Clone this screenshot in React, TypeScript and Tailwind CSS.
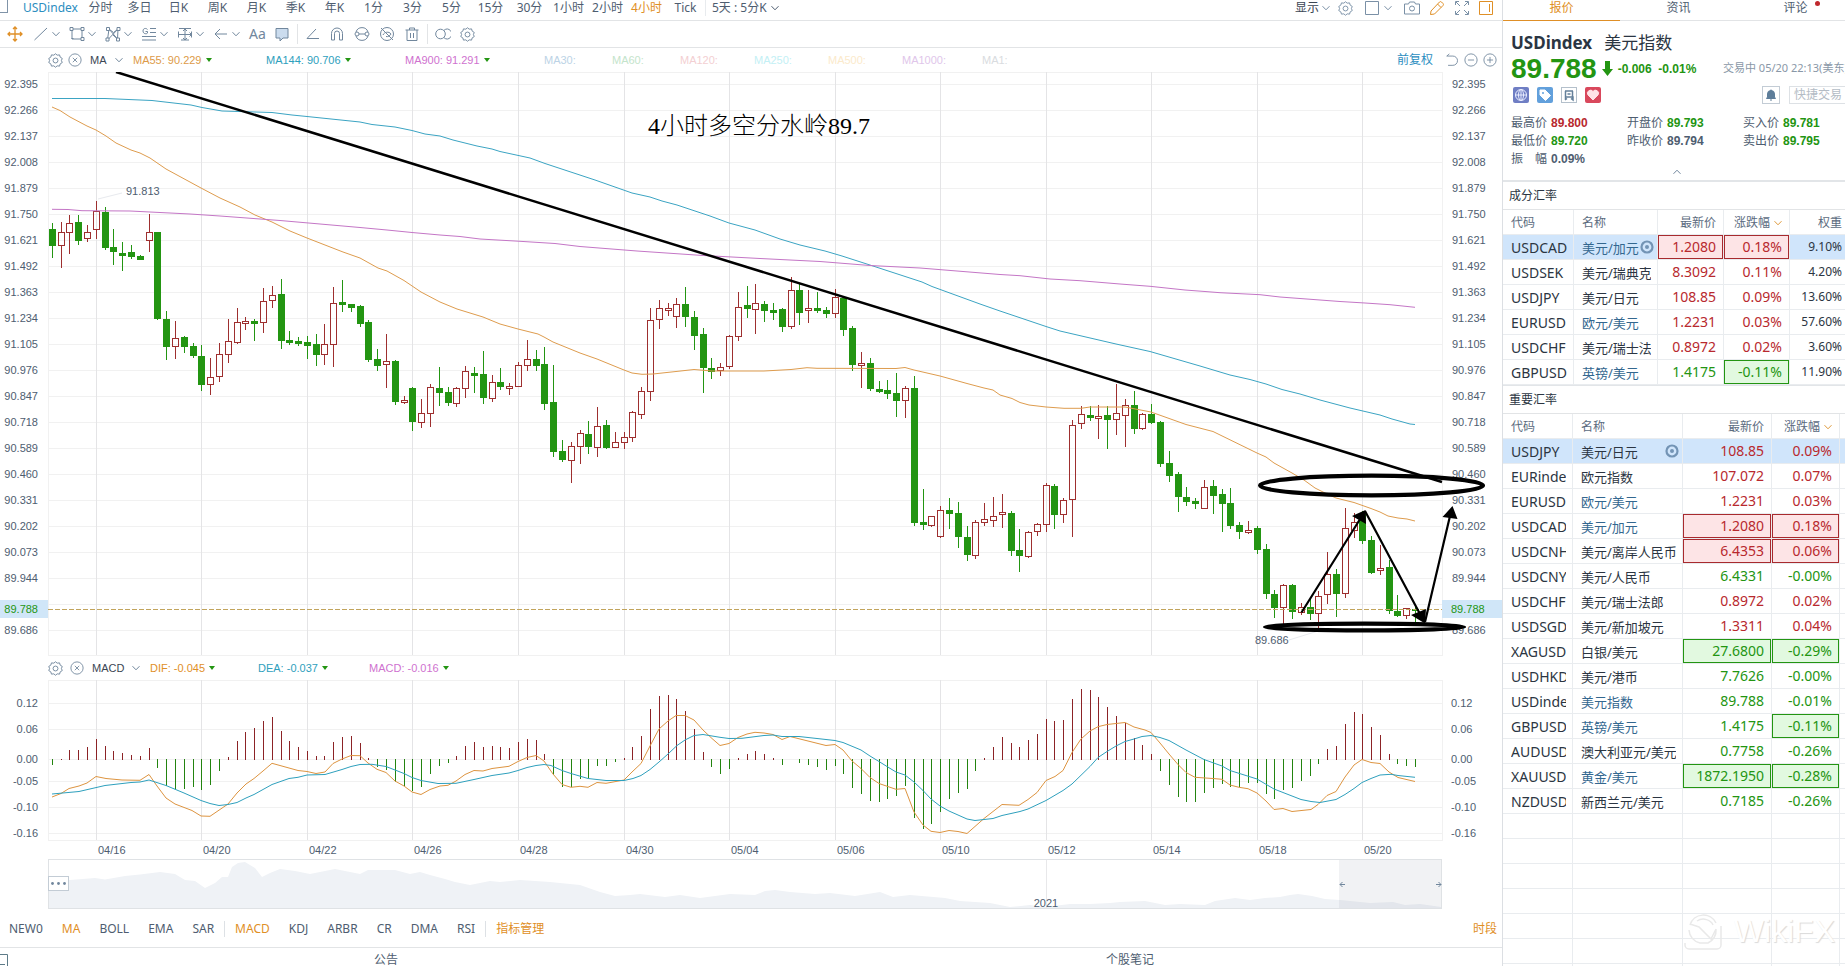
import React from "react";

/* ------------------------------------------------------------------ */
/* Chart data                                                          */
/* ------------------------------------------------------------------ */

type Candle = [number, number, number, number, number]; // high, body top, body bottom, low, rising

const CANDLES: Candle[] = [
  [223,229,246,258,0],[222,232,246,268,1],[215,223,233,254,1],[215,222,241,245,0],[225,232,239,242,1],
  [201,211,230,239,1],[207,212,248,250,0],[229,247,252,265,0],[242,253,256,271,0],[245,252,257,259,0],
  [255,256,260,260,0],[214,232,241,252,1],[232,232,319,320,0],[311,319,347,360,0],[321,338,347,359,1],
  [336,337,347,353,0],[343,346,356,358,0],[345,356,385,391,0],[358,377,385,395,1],[343,354,377,382,1],
  [319,341,355,363,1],[308,322,343,344,1],[317,321,324,330,1],[319,321,324,341,0],[288,301,323,333,1],
  [286,295,301,308,1],[279,294,341,349,0],[331,340,343,345,0],[337,341,344,346,0],[336,342,346,359,0],
  [334,344,355,366,0],[324,344,355,365,1],[287,303,345,367,1],[280,302,305,312,0],[304,304,308,312,0],
  [305,306,324,327,0],[320,322,360,362,0],[349,359,366,371,0],[334,361,365,388,1],[360,361,402,405,0],
  [396,400,403,404,1],[387,388,422,431,0],[399,413,423,428,1],[384,387,414,427,1],[367,388,393,406,0],
  [387,392,403,406,0],[387,388,404,407,1],[366,371,389,398,1],[367,373,376,393,0],[351,374,398,404,0],
  [375,382,399,402,1],[368,382,387,390,0],[383,386,389,395,1],[362,365,387,387,1],[340,359,366,371,1],
  [350,359,366,371,0],[347,364,404,410,0],[365,402,452,457,0],[440,451,460,462,0],[442,446,461,483,1],
  [430,433,447,464,1],[421,434,447,454,0],[407,426,448,457,1],[420,425,448,449,0],[432,442,448,448,1],
  [432,437,443,449,1],[411,412,438,442,1],[387,391,415,419,1],[308,320,392,401,1],[300,308,320,329,1],
  [303,308,311,316,1],[298,304,317,328,1],[287,304,317,327,0],[311,317,336,350,0],[328,334,368,393,0],
  [358,368,372,379,0],[363,367,371,376,1],[335,336,367,369,1],[292,307,337,341,1],[286,305,309,318,0],
  [284,303,310,334,1],[301,304,311,322,0],[303,310,313,320,0],[308,309,327,332,0],[277,290,327,329,1],
  [284,290,313,325,0],[290,308,311,323,1],[292,308,311,313,0],[307,310,314,318,0],[289,297,314,318,1],
  [298,298,330,336,0],[326,328,365,371,0],[352,363,366,388,1],[358,363,389,391,0],[381,389,392,393,0],
  [380,390,394,399,0],[373,393,401,417,0],[386,388,401,418,1],[376,388,523,526,0],[489,522,525,530,0],
  [516,516,526,527,1],[506,510,537,538,1],[498,510,514,529,0],[502,513,537,548,0],[526,537,555,561,0],
  [520,522,556,559,1],[503,519,523,526,1],[497,516,521,527,1],[494,512,515,528,1],[511,513,551,556,0],
  [529,550,556,572,0],[531,532,557,558,1],[523,524,532,536,1],[483,485,525,532,1],[484,486,515,529,0],
  [498,500,515,523,1],[420,425,500,537,1],[406,414,424,429,1],[406,415,418,421,0],[405,416,419,439,1],
  [406,415,420,449,0],[384,413,420,435,1],[399,405,416,447,1],[391,405,429,434,0],[413,414,429,430,1],
  [404,414,423,424,0],[421,422,464,467,0],[451,463,476,482,0],[472,474,497,512,0],[487,497,502,506,0],
  [498,501,504,509,0],[480,487,509,509,1],[480,486,496,514,0],[489,494,504,532,0],[488,503,526,529,0],
  [522,525,532,539,0],[521,530,533,534,1],[526,528,550,554,0],[544,549,594,599,0],[590,594,608,618,0],
  [584,585,608,625,1],[584,585,612,619,0],[603,607,613,615,1],[599,607,614,620,0],[591,596,614,629,1],
  [552,574,595,604,1],[569,574,594,617,0],[508,528,594,598,1],[513,522,531,538,1],[511,513,541,544,0],
  [536,540,573,574,0],[545,568,571,575,1],[560,567,611,614,0],[595,611,616,617,0],[608,608,616,619,1],
  [607,609,611,622,0],
];

const HISTOGRAM: number[] = [
  -6,1,10,10,13,21,14,9,7,5,4,12,-9,-27,-30,-30,-28,-31,-26,-12,3,19,28,32,39,43,29,19,13,9,4,4,18,23,24,17,2,-8,-11,-23,
  -27,-32,-28,-15,-7,-4,4,14,18,13,14,13,12,18,21,20,6,-16,-28,-28,-20,-19,-7,-7,-3,2,13,24,51,64,65,61,49,31,8,-8,-15,
  -10,2,6,9,6,2,-6,0,-4,-6,-8,-11,-7,-15,-29,-35,-42,-43,-40,-37,-27,-59,-70,-65,-53,-40,-34,-30,-12,2,13,23,17,13,20,
  26,41,39,40,61,71,70,63,53,44,37,22,15,6,-12,-26,-38,-43,-43,-34,-29,-25,-28,-28,-24,-24,-35,-40,-31,-29,-22,-17,-5,
  11,14,36,48,46,33,25,6,-5,-7,-8,
];

const MA55 =
  "52,107 60,110.5 70,117 87,126 96,130 106,136 116,143 131,150 140,153 150,158 166,169 201,188 220,198 240,207 255,215 272,222 290,231 307,238 343,252 360,258 378,268 387,271 404,280.5 421,292 440,302 457,309 483,317 500,324 518,329 538,334 544,337 553,342 580,353 597,359 624,370 632,373 642,374.3 653,374 676,371.5 694,369.5 712,371 764,371 791,369.5 807,367.7 817,368.3 896,368.5 905,367.5 914,370 940,376 967,383.5 984,388 993,390 1000,395 1012,398.5 1020,402.5 1029,405 1046,407 1064,408.3 1081,408.3 1090,407 1125,407 1151,412 1186,424.5 1213,431.5 1257,453 1266,457 1274,463 1292,473 1304,480 1315,488 1327,494 1336,498 1354,502.5 1371,508.5 1380,512 1388,516 1398,518 1407,519 1415,521";
const MA144 =
  "52,98.5 105,98.5 152,100.5 191,105 202,107.5 222,111 272,112.5 292,115 307,116.5 360,122 372,124.5 395,127 412,130.5 425,134 440,136 453,140 477,146 492,149 500,151.5 530,158 545,163.5 595,180 632,193 650,197 662,201 677,205 710,216 729,223 755,230 780,239 800,245 825,251 842,256 873,266 922,282 932,286.5 980,304 1000,311 1046,326.5 1060,331 1116,344 1150,351.5 1200,366 1230,375 1250,379.5 1266,384 1282,389.5 1300,394 1320,400 1350,408 1380,415 1392,419 1410,424 1415,424.5";
const MA900 =
  "52,209.3 68,209.5 82,210.7 130,211 190,214 220,216 280,220.5 360,227.5 387,230 412,232.5 440,235 460,236.5 480,239 520,241.3 555,243.5 580,246.5 637,251 700,255.3 760,258.5 820,261.5 870,265.5 920,268 1000,274.5 1020,275.7 1050,279 1080,280.7 1120,284 1150,286.3 1185,290 1205,291.5 1220,292.7 1260,294.7 1280,297 1340,301.5 1365,303 1390,304.7 1415,307.3";
const DIF =
  "52,797 61,793.5 69,788.5 79,786 87,783 96,776.5 106,778.5 122,780 140,780.3 149,774.5 157,786 166,798 175,804 192,810.5 201,816 210,816.3 228,804 237,793 246,784 254,778.5 263,771 272,763.3 289,768 298,770.5 307,771.5 316,773.5 325,772 333,763.5 342,759 351,755.5 360,755.7 368,763 377,769.3 386,772.5 395,781 404,786 412,792 421,794.5 430,789.5 440,786 448,785.3 456,781 465,774.5 474,770.5 483,771 492,768.5 509,766.3 518,761.5 527,757.5 536,755.5 544,761 553,774 562,784.5 571,787.3 580,786.3 588,787.3 597,782.5 606,783.3 624,780 632,772 641,763.5 650,746 659,729 668,721 676,715.5 685,715.5 694,720 703,730 712,738.5 720,745.5 729,743.5 738,737.5 747,734 755,732.3 764,733 773,734.5 782,739.5 790,736.5 826,745.5 835,744.5 843,750 852,761 861,768.5 870,777.5 879,783.5 896,789.3 905,788.5 914,812 923,825 931,831.3 940,832.5 949,830.5 958,831.5 967,833.5 984,818.5 1002,804.5 1019,805.3 1028,799.5 1037,792.5 1046,780.5 1055,776.5 1063,770.5 1072,752.5 1081,739 1090,731 1098,726.7 1107,724.5 1125,722.5 1134,727 1145,730 1151,732.5 1160,743 1169,754 1178,764.5 1186,772.5 1195,777.3 1213,778.5 1222,779.3 1230,785 1239,787.3 1248,788.7 1257,793 1266,801 1274,809.5 1283,808.5 1292,811.5 1311,809.5 1318,804.5 1327,795.5 1336,791.5 1345,777 1354,765 1362,759.5 1371,762.5 1380,763.5 1389,772 1398,777.5 1415,781.5";
const DEA =
  "52,794 79,791.5 105,785.5 131,782.5 140,782 149,780 166,785.5 184,793 201,800.5 210,803.5 219,805.5 228,804.5 237,802.5 246,798 254,794.5 272,784.5 289,778.5 298,777.3 307,775 325,774.5 342,769.5 351,766.5 360,764.5 372,764.3 386,766.5 395,770 404,773.5 412,777.5 421,780.5 438,783.5 456,783.3 474,779.5 492,775.5 509,773 518,770.5 527,767.5 536,765.5 544,764.5 551,765.5 562,770.5 571,773.5 588,778.5 606,780.5 624,780.5 633,778.5 641,775.5 650,769.5 659,762 668,754 677,745.5 685,740 694,735.5 703,734.5 720,737.3 729,738.5 742,738.3 764,735.5 773,735 782,736.5 799,736.5 835,740.5 843,742.5 861,750 870,756 879,761.5 887,766.5 896,772 905,775 914,782 923,790.5 931,799 940,806 949,811 958,815 967,819 975,820.5 984,819.5 993,818.5 1002,815.5 1020,811.5 1028,809 1046,800.5 1063,790.5 1072,784 1090,766.5 1098,757.5 1107,751.5 1116,746 1125,741.5 1134,739 1142,736.5 1151,735.5 1160,737.5 1169,740.5 1186,750 1204,759.5 1222,766 1230,770.5 1257,779 1274,789 1283,792.5 1292,796 1301,799.5 1311,801.5 1320,802.5 1336,799.5 1345,794.5 1354,788.5 1362,782.5 1371,778.5 1380,775 1391,774.3 1398,775.5 1415,777.3";
const HISTORY =
  "48,908 48,881 70,880 95,878 105,879.5 125,876 140,874.5 160,872 175,874 185,880 195,881 205,888 215,883 222,877 228,877 232,867 238,863 245,862 255,868 262,877 270,873 280,869 295,871 310,874 320,872 335,869 350,872 360,874 368,870 395,870 410,874 420,872 430,875 445,879 455,882 470,885 480,883 490,881 500,882 520,880 550,882 580,885 600,892 615,896 630,895 640,894 665,897 680,895 700,898 715,896 730,894 755,895 765,891 775,890 790,892 815,894 830,893 855,896 880,892 893,897 910,895 945,898 960,901 990,903 1010,907 1030,905 1045,907 1070,904 1090,904 1110,903 1120,902 1145,901 1165,905 1180,904 1205,905 1215,901 1235,898 1250,900 1265,898 1280,897 1290,895 1298,894 1312,896 1325,899 1340,900 1370,903 1393,902 1405,905 1420,904 1441,907 1441,908";

const PRICES = [
  "92.395","92.266","92.137","92.008","91.879","91.750","91.621","91.492","91.363","91.234","91.105",
  "90.976","90.847","90.718","90.589","90.460","90.331","90.202","90.073","89.944","","89.686",
];
const DATES = ["04/16","04/20","04/22","04/26","04/28","04/30","05/04","05/06","05/10","05/12","05/14","05/18","05/20"];
const MACD_LEVELS: [string, number][] = [
  ["0.12", 703],["0.06", 729],["0.00", 759],["-0.05", 781],["-0.10", 807],["-0.16", 833],
];

const xAt = (i: number) => Math.floor(52.35 + 8.795 * i);

/* ------------------------------------------------------------------ */
/* Small icons                                                         */
/* ------------------------------------------------------------------ */

function Icon({ children, className = "" }: { children: React.ReactNode; className?: string }) {
  return (
    <svg viewBox="0 0 16 16" className={`h-4 w-4 shrink-0 ${className}`} fill="none" stroke="currentColor" strokeWidth="1" aria-hidden="true">
      {children}
    </svg>
  );
}

function Chevron({ className = "" }: { className?: string }) {
  return (
    <svg viewBox="0 0 8 8" className={`h-2 w-2 shrink-0 ${className}`} fill="none" stroke="currentColor" aria-hidden="true">
      <path d="M.5 2.2 4 5.8 7.5 2.2" />
    </svg>
  );
}

const Gear = () => (
  <Icon className="h-[15px] w-[15px]">
    <path d="M8 .8 9.8 2.3 12.3 2 13 4.4 15.2 5.8 14.3 8 15.2 10.2 13 11.6 12.3 14 9.8 13.7 8 15.2 6.2 13.7 3.7 14 3 11.6.8 10.2 1.7 8 .8 5.8 3 4.4 3.7 2 6.2 2.3Z" strokeLinejoin="round" />
    <circle cx="8" cy="8" r="2.6" />
  </Icon>
);

const CloseCircle = () => (
  <Icon className="h-[14px] w-[14px]">
    <circle cx="8" cy="8" r="7" />
    <path d="m5.5 5.5 5 5m0-5-5 5" />
  </Icon>
);

const Down = () => (
  <svg viewBox="0 0 6 4" className="h-1 w-1.5 shrink-0" aria-hidden="true">
    <path d="M0 0h6L3 4Z" fill="#239512" />
  </svg>
);

const DRAW_TOOLS: [string, React.ReactNode][] = [
  ["直线", <path key="a" d="M1.5 14 14 2" />],
  ["矩形", <g key="a"><path d="M3 3h10v10H3z" /><path d="M1 1.5h3v3H1zM12 1.5h3v3h-3zM12 11.500h3v3h-3zM2.500 12.500h2" fill="#fff" /></g>],
  ["形态", <g key="a"><path d="M2.500 13.500 4 3l8.500 10L13 3 3.500 13M4 3l4.500 3.500L13 3M8 9l4.500 4" /><path d="M1.500 1.500h3v3h-3zM12 1.500h3v3h-3zM1 12h3v3H1zM11.500 12h3v3h-3z" fill="#fff" /></g>],
  ["黄金分割", <g key="a"><path d="M9 2.500h6M9 6.500h6M1 10.500h14M1 14h14" /><path d="M6.500 3.500C5.500 2 2 1.800 2 5s4 3.200 4.500 2V5.500H4.500" /></g>],
  ["测量", <g key="a"><path d="M2 2.500h12M4 14h8M8 3v11M1 8.500h14M1.500 5.500v6M14.500 5.500v6M6 5l2-2 2 2M6 12l2 2 2-2M12.500 6.500l2 2-2 2" /></g>],
  ["箭头", <path key="a" d="M14 8H2m5-5L2 8l5 5" />],
];

const EDIT_TOOLS: [string, React.ReactNode][] = [
  ["角度", <path key="a" d="M12 3 3 12.500h12" />],
  ["磁铁", <path key="a" d="M2.500 14V7.500a5.500 5.500 0 0 1 11 0V14h-3V7.500a2.500 2.500 0 0 0-5 0V14z" />],
  ["同步", <g key="a"><path d="M2 6a6.300 6.300 0 0 1 12 0M14 10a6.300 6.300 0 0 1-12 0" /><circle cx="3" cy="8" r="2" /><circle cx="13" cy="8" r="2" /><path d="M5 8h6" /></g>],
  ["隐藏", <g key="a"><circle cx="8" cy="8" r="6.500" /><path d="m2 2 12 12M4 9c1-3 6-4 8-1M7 10.500c2 .5 4-.5 5-2.500" /></g>],
  ["删除", <path key="a" d="M1.500 4h13M5.500 4V2h5v2M3 4v10.500h10V4M6.500 7v5M9.500 7v5" />],
];

/* ------------------------------------------------------------------ */
/* Bars                                                                */
/* ------------------------------------------------------------------ */

const PERIODS = ["分时","多日","日K","周K","月K","季K","年K","1分","3分","5分","15分","30分","1小时","2小时","4小时","Tick"];

function PeriodBar() {
  return (
    <nav className="flex h-[21px] shrink-0 items-start border-b border-[#e2e4e6] leading-4 whitespace-nowrap">
      <span className="-ml-1 h-[13px] w-3 shrink-0 border border-t-0 border-[#8094a8]" />
      <a href="#usdindex" className="ml-[15px] w-[58px] text-[#2c8ebf]">USDindex</a>
      {PERIODS.map((p) => (
        <button key={p} className={p === "4小时" ? "w-[39px] text-center text-[#df8f26]" : "w-[39px] text-center"}>
          {p}
        </button>
      ))}
      <span className="h-4 w-px bg-[#e8ebee]" />
      <button className="ml-[6px] flex items-center gap-1">5天 : 5分K <Chevron /></button>
      <div className="ml-auto flex items-center pr-2 text-[#7a90a6]">
        <button className="flex items-center gap-[3px] text-[#3b4653]">显示 <Chevron className="text-[#7a90a6]" /></button>
        <button aria-label="设置" className="ml-2"><Gear /></button>
        <button aria-label="布局" className="ml-[11px] flex items-center gap-1"><Icon><path d="M1.500 1.500h13v13h-13z" /></Icon><Chevron /></button>
        <button aria-label="截图" className="ml-3"><Icon><path d="M.5 4h4l1-2h5l1 2h4v10H.5z" /><circle cx="8" cy="8.500" r="2.500" /></Icon></button>
        <button aria-label="画笔" className="ml-[9px] text-[#df8f26]"><Icon><path d="M1.500 14.500 2 11 10.500 2a1.500 1.500 0 0 1 2 0l1.500 1.500a1.500 1.500 0 0 1 0 2L5.500 14zM8.500 4l3.500 3.500" /></Icon></button>
        <button aria-label="全屏" className="ml-[9px]"><Icon><path d="M1.500 5V1.500H5M11 1.500h3.500V5M14.500 11v3.500H11M5 14.500H1.500V11M2 2l4 4M14 2l-4 4M14 14l-4-4M2 14l4-4" /></Icon></button>
        <button aria-label="侧栏" className="ml-2 text-[#df8f26]"><Icon><path d="M1.500 1.500h13v13h-13zM11.500 4v8" /></Icon></button>
      </div>
    </nav>
  );
}

function DrawBar() {
  return (
    <div className="flex h-[27px] shrink-0 items-center border-b border-[#e2e4e6] pl-[7px] text-[#71879d]">
      <button aria-label="移动" className="mr-[10px] text-[#df8f26]">
        <Icon><path d="M8 1v14M1 8h14M6 3l2-2 2 2M6 13l2 2 2-2M3 6 1 8l2 2M13 6l2 2-2 2" strokeWidth="1.300" /></Icon>
      </button>
      {DRAW_TOOLS.map(([label, art]) => (
        <button key={label} aria-label={label} className="flex w-9 items-center gap-[3px]">
          <Icon>{art}</Icon><Chevron />
        </button>
      ))}
      <button className="w-[25px] text-left text-sm leading-4">Aa</button>
      <button aria-label="注释" className="mr-[7px]">
        <Icon><path d="M2 2.500h12v9.500H9l-3 3v-3H2z" fill="#cbdcee" strokeLinejoin="round" /></Icon>
      </button>
      <span className="mr-[6px] h-5 w-px bg-[#e2e4e6]" />
      <div className="flex gap-[9px]">
        {EDIT_TOOLS.map(([label, art]) => (
          <button key={label} aria-label={label}><Icon>{art}</Icon></button>
        ))}
      </div>
      <span className="mx-[7px] h-5 w-px bg-[#e2e4e6]" />
      <div className="flex gap-[9px]">
        <button aria-label="对比"><Icon><circle cx="5.500" cy="8" r="4.800" /><path d="M9 4.300a4.800 4.800 0 1 1 0 7.400" /></Icon></button>
        <button aria-label="画线设置"><Gear /></button>
      </div>
    </div>
  );
}

function MaLegend() {
  return (
    <div className="flex h-6 shrink-0 items-center pl-12 font-['Liberation_Sans',sans-serif] text-[11px] whitespace-nowrap">
      <div className="flex w-[85px] items-center text-[#71879d]">
        <button aria-label="MA 设置" className="mr-[5px]"><Gear /></button>
        <button aria-label="关闭 MA"><CloseCircle /></button>
        <button className="ml-2 flex items-center gap-2 text-[#3b4653]">MA <Chevron className="text-[#71879d]" /></button>
      </div>
      <span className="flex w-[133px] items-center gap-1 text-[#dd9a48]">MA55: 90.229 <Down /></span>
      <span className="flex w-[139px] items-center gap-1 text-[#2ea0bd]">MA144: 90.706 <Down /></span>
      <span className="flex w-[139px] items-center gap-1 text-[#cf72cf]">MA900: 91.291 <Down /></span>
      <span className="w-[68px] text-[#bcd3e6]">MA30:</span>
      <span className="w-[68px] text-[#c4e4cb]">MA60:</span>
      <span className="w-[74px] text-[#f3cfd2]">MA120:</span>
      <span className="w-[74px] text-[#c3f0f5]">MA250:</span>
      <span className="w-[74px] text-[#fbeacb]">MA500:</span>
      <span className="w-[80px] text-[#e0c6ea]">MA1000:</span>
      <span className="text-[#d9dce0]">MA1:</span>
      <div className="ml-auto flex items-center gap-[5px] pr-[5px] font-['Noto_Sans','Noto_Sans_CJK_SC',sans-serif] text-xs text-[#71879d]">
        <button className="mr-[7px] text-[#2c8ebf]">前复权</button>
        <button aria-label="重置"><Icon className="h-[14px] w-[14px]"><path d="M5 1 2 3.500h7a5.300 5.300 0 0 1 0 10.600H3.500" /></Icon></button>
        <button aria-label="缩小"><Icon className="h-[14px] w-[14px]"><circle cx="8" cy="8" r="7" /><path d="M4.500 8h7" /></Icon></button>
        <button aria-label="放大"><Icon className="h-[14px] w-[14px]"><circle cx="8" cy="8" r="7" /><path d="M4.500 8h7M8 4.500v7" /></Icon></button>
      </div>
    </div>
  );
}

function MacdLegend() {
  return (
    <div className="flex h-6 shrink-0 items-center pl-12 font-['Liberation_Sans',sans-serif] text-[11px] whitespace-nowrap">
      <div className="flex w-[102px] items-center text-[#71879d]">
        <button aria-label="MACD 设置" className="mr-[7px]"><Gear /></button>
        <button aria-label="关闭 MACD"><CloseCircle /></button>
        <button className="ml-2 flex items-center gap-2 text-[#3b4653]">MACD <Chevron className="text-[#71879d]" /></button>
      </div>
      <span className="flex w-[108px] items-center gap-1 text-[#df8f26]">DIF: -0.045 <Down /></span>
      <span className="flex w-[111px] items-center gap-1 text-[#2ea0bd]">DEA: -0.037 <Down /></span>
      <span className="flex items-center gap-1 text-[#cf72cf]">MACD: -0.016 <Down /></span>
    </div>
  );
}

/* ------------------------------------------------------------------ */
/* Charts                                                              */
/* ------------------------------------------------------------------ */

const FONT = "'Liberation Sans', sans-serif";

function PriceChart() {
  return (
    <svg viewBox="0 72 1502 584" className="block h-auto w-full shrink-0" fontFamily={FONT} fontSize="11" role="img" aria-label="USDindex 4小时K线">
      <g stroke="#f1f1f1" shapeRendering="crispEdges">
        {PRICES.map((_, k) => <path key={k} d={`M48 ${84.5 + 26 * k}H1442`} />)}
        <path d="M48 72.500H1442.500V655.500H48.500V72.500" fill="none" />
      </g>
      <g stroke="#e4e4e6" shapeRendering="crispEdges">
        {DATES.map((d, k) => <path key={d} d={`M${xAt(5 + 12 * k) + 0.5} 72V655`} />)}
      </g>
      <g fill="#4e5d70">
        {PRICES.map((p, k) => (
          <React.Fragment key={k}>
            <text x="38" y={88 + 26 * k} textAnchor="end">{p}</text>
            <text x="1452" y={88 + 26 * k}>{p}</text>
          </React.Fragment>
        ))}
        <path d="M98 199 122 193" stroke="#e8eaee" />
        <text x="126" y="195">91.813</text>
        <path d="M1289 640 1318 631" stroke="#e8eaee" />
        <text x="1255" y="644">89.686</text>
      </g>
      <g shapeRendering="crispEdges">
        {CANDLES.map(([h, t, b, l, up], i) => {
          const x = xAt(i);
          return up ? (
            <g key={i} fill="none" stroke="#9e2f2f">
              <path d={`M${x + 0.5} ${h}V${t}M${x + 0.5} ${b}V${l}`} />
              <rect x={x - 2.5} y={t + 0.5} width="6" height={Math.max(1, b - t - 1)} />
            </g>
          ) : (
            <g key={i} fill="#239512">
              <rect x={x} y={h} width="1" height={l - h} />
              <rect x={x - 3} y={t} width="7" height={b - t} />
            </g>
          );
        })}
      </g>
      <g fill="none" strokeWidth="1">
        <polyline points={MA55} stroke="#de9c4e" />
        <polyline points={MA144} stroke="#3ba4c3" />
        <polyline points={MA900} stroke="#c476c6" />
      </g>
      <path d="M48 609.500H1442" stroke="#c2a45c" strokeDasharray="5 2" />
      <rect x="0" y="600" width="48" height="18" fill="#d0e6f8" />
      <rect x="1442" y="600" width="60" height="18" fill="#d0e6f8" />
      <g fill="#239512">
        <text x="38" y="613" textAnchor="end">89.788</text>
        <text x="1451" y="613">89.788</text>
      </g>
      <g fill="none" stroke="#000">
        <path d="M116 72 1442 482" strokeWidth="2.500" />
        <ellipse cx="1371.500" cy="485.500" rx="111.500" ry="9.800" strokeWidth="4.200" />
        <ellipse cx="1364.500" cy="627" rx="99.500" ry="3.400" strokeWidth="4.200" />
        <path d="M1301.500 612.500 1362 516M1365 511 1420 614M1425 622 1450 516" strokeWidth="2.200" />
      </g>
      <path d="M1365.500 510 1366 524 1352 516ZM1425 623.500 1411 615 1426 609ZM1452.500 506 1457.500 519 1442.500 517Z" />
      <text x="648" y="134" fontSize="24" fontWeight="300" fontFamily="'Liberation Serif', 'Noto Sans CJK SC', serif">4小时多空分水岭89.7</text>
    </svg>
  );
}

function MacdChart() {
  return (
    <svg viewBox="0 680 1502 179" className="block h-auto w-full shrink-0" fontFamily={FONT} fontSize="11" role="img" aria-label="MACD">
      <g stroke="#f1f1f1" shapeRendering="crispEdges" fill="none">
        {MACD_LEVELS.map(([v, y]) => <path key={v} d={`M48 ${y + 0.5}H1442`} />)}
        <path d="M48.500 680.500H1442.500V840.500H48.500Z" />
      </g>
      <g stroke="#e4e4e6" shapeRendering="crispEdges">
        {DATES.map((d, k) => <path key={d} d={`M${xAt(5 + 12 * k) + 0.5} 680V840`} />)}
      </g>
      <g fill="#4e5d70">
        {MACD_LEVELS.map(([v, y]) => (
          <React.Fragment key={v}>
            <text x="38" y={y + 4} textAnchor="end">{v}</text>
            <text x="1451" y={y + 4}>{v}</text>
          </React.Fragment>
        ))}
        {DATES.map((d, k) => <text key={d} x={xAt(5 + 12 * k) + 2} y="854">{d}</text>)}
      </g>
      <g shapeRendering="crispEdges">
        {HISTOGRAM.map((v, i) => (
          <rect key={i} x={xAt(i)} y={v > 0 ? 760 - v : 759} width="1" height={Math.abs(v)} fill={v > 0 ? "#8c2326" : "#23840f"} />
        ))}
      </g>
      <polyline points={DIF} fill="none" stroke="#dd9440" />
      <polyline points={DEA} fill="none" stroke="#2ea0bd" />
    </svg>
  );
}

function Navigator() {
  return (
    <svg viewBox="0 859 1502 50" className="block h-auto w-full shrink-0" fontFamily={FONT} fontSize="11" role="img" aria-label="历史区间">
      <polygon points={HISTORY} fill="#eff2f6" />
      <path d="M1046.500 860V908" stroke="#e8e8ea" />
      <rect x="1339" y="860" width="103" height="48" fill="#8898a8" fillOpacity="0.120" />
      <path d="M48.500 859.500H1441.500V908.500H48.500Z" fill="none" stroke="#dfe2e5" shapeRendering="crispEdges" />
      <rect x="48.500" y="876.500" width="20" height="14" fill="#fff" stroke="#c3ccd5" />
      <g fill="#71879d"><circle cx="52.500" cy="883.500" r="1.400" /><circle cx="58.500" cy="883.500" r="1.400" /><circle cx="64.500" cy="883.500" r="1.400" /></g>
      <path d="M1345 884.500h-5m2.500-2.500-2.500 2.500 2.500 2.500M1436 884.500h5m-2.500-2.500 2.500 2.500-2.500 2.500" fill="none" stroke="#71879d" />
      <text x="1046" y="907" textAnchor="middle" fill="#4e5d70">2021</text>
    </svg>
  );
}

function IndicatorBar() {
  const item = (t: string, on = false) => (
    <button key={t} className={on ? "px-[9px] text-[#df8f26]" : "px-[9px]"}>{t}</button>
  );
  return (
    <div className="flex h-[39px] shrink-0 items-center gap-px border-b border-[#e2e4e6] pt-0.5 whitespace-nowrap">
      {item("NEW0")}{item("MA", true)}{item("BOLL")}{item("EMA")}{item("SAR")}
      <span className="h-4 w-px bg-[#dde1e5]" />
      {item("MACD", true)}{item("KDJ")}{item("ARBR")}{item("CR")}{item("DMA")}{item("RSI")}
      <span className="h-4 w-px bg-[#dde1e5]" />
      {item("指标管理", true)}
      <button className="mr-[5px] ml-auto text-[#df8f26]">时段</button>
    </div>
  );
}

/* ------------------------------------------------------------------ */
/* Quote panel                                                         */
/* ------------------------------------------------------------------ */

const STATS: [string, string, string][] = [
  ["最高价","89.800","text-[#b8292e]"],["开盘价","89.793","text-[#239512]"],["买入价","89.781","text-[#239512]"],
  ["最低价","89.720","text-[#239512]"],["昨收价","89.794","text-[#4e5d70]"],["卖出价","89.795","text-[#239512]"],
  ["振　幅","0.09%","text-[#4e5d70]"],
];

function Quote() {
  return (
    <section className="shrink-0 border-b-2 border-[#e2e5e8] pt-[10px] pb-1 pl-2 whitespace-nowrap">
      <h1 className="flex h-6 items-center gap-3 text-[17px] text-[#2b3542]">
        <span className="font-bold">USDindex</span><span>美元指数</span>
      </h1>
      <div className="flex h-[27px] items-center font-['Liberation_Sans',sans-serif] font-bold text-[#239512]">
        <span className="text-[28px] leading-[26px]">89.788</span>
        <svg viewBox="0 0 11 15" className="ml-[5px] h-[15px] w-[11px] shrink-0" aria-hidden="true"><path d="M3 0h5v8h3L5.500 15 0 8h3z" fill="#239512" /></svg>
        <span className="ml-[5px] text-xs">-0.006&nbsp; -0.01%</span>
        <span className="ml-auto w-[122px] overflow-hidden font-['Noto_Sans','Noto_Sans_CJK_SC',sans-serif] text-[11px] font-normal text-[#8997a7]">交易中 05/20 22:13(美东)</span>
      </div>
      <div className="flex h-[26px] items-center gap-2 pl-[2px]">
        <button aria-label="全球" className="h-4 w-4 rounded-xs bg-[#6f7ec4] text-[#e9edff]"><Icon><circle cx="8" cy="8" r="5.500" /><ellipse cx="8" cy="8" rx="2.500" ry="5.500" /><path d="M2.500 8h11M8 2.500v11" /></Icon></button>
        <button aria-label="标签" className="h-4 w-4 rounded-xs bg-[#62a0dc] text-white"><Icon><path d="M3 3h5l5.500 5.500-5 5L3 8z" fill="#fff" /><circle cx="6" cy="6" r="1" fill="#62a0dc" stroke="none" /></Icon></button>
        <button aria-label="笔记" className="h-4 w-4 border border-[#b4c0cb] text-[#64809a]"><Icon className="-m-px"><path d="M4.500 4v8.500M11.500 4v8.500M4 4h8M6.500 7h3M4 10h8v3l-2-1.500M4 13l2-1.500" strokeWidth="1.500" /></Icon></button>
        <button aria-label="自选" className="h-4 w-4 rounded-xs bg-[#d9485c]"><Icon className="text-[#ffe3e6]"><path d="M8 13 3 8a3 3 0 0 1 5-3.500A3 3 0 0 1 13 8z" fill="currentColor" /></Icon></button>
        <div className="ml-auto flex items-center gap-[9px]">
          <button aria-label="提醒" className="flex h-[18px] w-[18px] items-center justify-center border border-[#c3ccd5] text-[#5d7d9a]"><Icon><path d="M3.500 11.500h9L11.500 10V7a3.500 3.500 0 0 0-7 0v3zM7 13h2M8 2.500v1.500" fill="currentColor" /></Icon></button>
          <button className="flex h-[18px] w-14 items-center overflow-hidden border border-r-0 border-[#dde1e5] pl-1 text-[#b4bcc5]">快捷交易</button>
        </div>
      </div>
      <dl className="mt-[6px] grid grid-cols-[116px_116px_1fr]">
        {STATS.map(([k, v, c]) => (
          <div key={k} className="flex h-[18px] items-center gap-1">
            <dt>{k}</dt>
            <dd className={`font-['Liberation_Sans',sans-serif] font-bold ${c}`}>{v}</dd>
          </div>
        ))}
      </dl>
      <button aria-label="收起" className="mr-2 flex h-2 w-[332px] items-center justify-center text-[#71879d]"><Chevron className="rotate-180" /></button>
    </section>
  );
}

type Row = {
  code: string; name: string; price: string; chg: string; weight?: string;
  link?: boolean; boxPrice?: boolean; boxChg?: boolean; selected?: boolean;
};

const PARTS: Row[] = [
  { code: "USDCAD", name: "美元/加元", price: "1.2080", chg: "0.18%", weight: "9.10%", link: true, boxPrice: true, boxChg: true, selected: true },
  { code: "USDSEK", name: "美元/瑞典克朗", price: "8.3092", chg: "0.11%", weight: "4.20%" },
  { code: "USDJPY", name: "美元/日元", price: "108.85", chg: "0.09%", weight: "13.60%" },
  { code: "EURUSD", name: "欧元/美元", price: "1.2231", chg: "0.03%", weight: "57.60%", link: true },
  { code: "USDCHF", name: "美元/瑞士法郎", price: "0.8972", chg: "0.02%", weight: "3.60%" },
  { code: "GBPUSD", name: "英镑/美元", price: "1.4175", chg: "-0.11%", weight: "11.90%", link: true, boxChg: true },
];

const MAJORS: Row[] = [
  { code: "USDJPY", name: "美元/日元", price: "108.85", chg: "0.09%", selected: true },
  { code: "EURindex", name: "欧元指数", price: "107.072", chg: "0.07%" },
  { code: "EURUSD", name: "欧元/美元", price: "1.2231", chg: "0.03%", link: true },
  { code: "USDCAD", name: "美元/加元", price: "1.2080", chg: "0.18%", link: true, boxPrice: true, boxChg: true },
  { code: "USDCNH", name: "美元/离岸人民币", price: "6.4353", chg: "0.06%", boxPrice: true, boxChg: true },
  { code: "USDCNY", name: "美元/人民币", price: "6.4331", chg: "-0.00%" },
  { code: "USDCHF", name: "美元/瑞士法郎", price: "0.8972", chg: "0.02%" },
  { code: "USDSGD", name: "美元/新加坡元", price: "1.3311", chg: "0.04%" },
  { code: "XAGUSD", name: "白银/美元", price: "27.6800", chg: "-0.29%", boxPrice: true, boxChg: true },
  { code: "USDHKD", name: "美元/港币", price: "7.7626", chg: "-0.00%" },
  { code: "USDindex", name: "美元指数", price: "89.788", chg: "-0.01%", link: true },
  { code: "GBPUSD", name: "英镑/美元", price: "1.4175", chg: "-0.11%", link: true, boxChg: true },
  { code: "AUDUSD", name: "澳大利亚元/美元", price: "0.7758", chg: "-0.26%" },
  { code: "XAUUSD", name: "黄金/美元", price: "1872.1950", chg: "-0.28%", link: true, boxPrice: true, boxChg: true },
  { code: "NZDUSD", name: "新西兰元/美元", price: "0.7185", chg: "-0.26%" },
];

function Value({ text, down, boxed }: { text: string; down: boolean; boxed?: boolean }) {
  const tone = down
    ? boxed ? "border-[#239512] bg-[#e2f9e0] text-[#239512]" : "border-transparent text-[#239512]"
    : boxed ? "border-[#a82a2e] bg-[#fde4e6] text-[#b8292e]" : "border-transparent text-[#b8292e]";
  return <div className={`flex h-6 items-center justify-end border pr-[6px] text-sm leading-none ${tone}`}>{text}</div>;
}

const CELL = "h-[25px] border-r border-b border-[#e9ecef] p-0";

function RateTable({ title, rows, widths, blank = 0 }: { title: string; rows: Row[]; widths: string[]; blank?: number }) {
  return (
    <section className="shrink-0">
      <h2 className="flex h-7 items-center border-b border-[#e2e4e6] pl-[6px] text-[#2b3542]">{title}</h2>
      <table className="w-full table-fixed border-separate border-spacing-0 whitespace-nowrap">
        <colgroup>
          {widths.map((w, i) => <col key={i} className={w} />)}
          <col />
        </colgroup>
        <thead>
          <tr className="text-[#5b6b7e]">
            <th className={`${CELL} pt-0.5 pl-2 text-left font-normal`}>代码</th>
            <th className={`${CELL} pt-0.5 pl-2 text-left font-normal`}>名称</th>
            <th className={`${CELL} pt-0.5 pr-[7px] text-right font-normal`}>最新价</th>
            <th className={`${CELL} pt-0.5 pr-[7px] font-normal`}>
              <span className="flex items-center justify-end gap-1">涨跌幅 <Chevron className="text-[#df9a3c]" /></span>
            </th>
            <th className="h-[25px] border-b border-[#e9ecef] p-0 pt-0.5 pr-[3px] text-right font-normal">{rows[0].weight ? "权重" : ""}</th>
          </tr>
        </thead>
        <tbody>
          {rows.map((r) => {
            const down = r.chg.startsWith("-");
            return (
              <tr key={r.code} className={r.selected ? "bg-[#d0e5fb]" : ""}>
                <td className={`${CELL} pr-[6px] pl-2`}><div className="overflow-hidden pt-0.5 text-sm leading-[22px] text-[#2b3542]">{r.code}</div></td>
                <td className={`${CELL} relative pr-[6px] pl-2`}>
                  <div className={`overflow-hidden pt-0.5 text-[13px] leading-[22px] ${r.link ? "text-[#33678f]" : "text-[#2b3542]"}`}>{r.name}</div>
                  {r.selected && (
                    <svg viewBox="0 0 14 14" className="absolute top-[5px] right-[3px] h-[14px] w-[14px]" aria-hidden="true">
                      <circle cx="7" cy="7" r="5.500" fill="none" stroke="#7394b5" strokeWidth="2.200" /><circle cx="7" cy="7" r="2" fill="#7394b5" />
                    </svg>
                  )}
                </td>
                <td className={CELL}><Value text={r.price} down={down} boxed={r.boxPrice} /></td>
                <td className={CELL}><Value text={r.chg} down={down} boxed={r.boxChg} /></td>
                <td className="h-[25px] border-b border-[#e9ecef] p-0 pr-[3px] text-right text-[#2b3542]">{r.weight}</td>
              </tr>
            );
          })}
          {Array.from({ length: blank }, (_, i) => (
            <tr key={i}>
              <td className={CELL} /><td className={CELL} /><td className={CELL} /><td className={CELL} />
              <td className="h-[25px] border-b border-[#e9ecef] p-0" />
            </tr>
          ))}
        </tbody>
      </table>
    </section>
  );
}

function Watermark() {
  return (
    <div className="pointer-events-none absolute right-[10px] bottom-4 flex items-center gap-3" aria-hidden="true">
      <svg viewBox="0 0 38 38" className="h-[38px] w-[38px]" fill="none" stroke="#e9e9e9" strokeWidth="1.500">
        <path d="M1 31v2a4 4 0 0 0 4 4h28a4 4 0 0 0 4-4V14M6 13A14 14 0 0 1 32 11M5 18a14 14 0 0 0 11 13h8a14 14 0 0 0 8-14M6 12l9 3 12 12 5-10M13 9c6-4 14-1 16 4" />
      </svg>
      <span className="font-['Liberation_Sans',sans-serif] text-[32px] leading-8 text-white [text-shadow:1px_1px_1px_#dadada]">WikiFX</span>
    </div>
  );
}

export default function App() {
  return (
    <div className="flex h-screen min-w-[1200px] overflow-hidden bg-white font-['Noto_Sans','Noto_Sans_CJK_SC',sans-serif] text-xs text-[#4e5d70]">
      <main className="flex min-w-0 flex-1 flex-col">
        <PeriodBar />
        <DrawBar />
        <MaLegend />
        <PriceChart />
        <MacdLegend />
        <MacdChart />
        <Navigator />
        <IndicatorBar />
        <footer className="flex min-h-0 flex-1 items-start pt-[5px]">
          <svg viewBox="0 0 8 16" className="mt-px h-4 w-2 shrink-0" fill="none" stroke="#5d7b88" aria-hidden="true"><path d="M0 .5h7.500v15M0 10.500h5" /></svg>
          <div className="flex flex-1 pl-[6px] text-center leading-[14px]">
            <button className="flex-1">公告</button>
            <button className="flex-1">个股笔记</button>
          </div>
        </footer>
      </main>
      <aside className="relative flex w-[343px] shrink-0 flex-col overflow-hidden border-l border-[#dcdfe3]">
        <nav className="flex h-[21px] shrink-0 items-start border-b border-[#e2e4e6] leading-4">
          <button className="h-[21px] w-[117px] shrink-0 border-b border-[#df8f26] pb-1 text-[#df8f26]">报价</button>
          <button className="w-[117px] shrink-0">资讯</button>
          <button className="flex w-[117px] shrink-0 justify-center gap-[7px] pl-3">评论 <i className="mt-px h-[5px] w-[5px] rounded-full bg-[#c0282d]" /></button>
        </nav>
        <Quote />
        <RateTable title="成分汇率" rows={PARTS} widths={["w-[71px]", "w-[84px]", "w-[66px]", "w-[66px]"]} />
        <div className="h-px shrink-0 bg-[#e2e5e8]" />
        <RateTable title="重要汇率" rows={MAJORS} widths={["w-[70px]", "w-[110px]", "w-[89px]", "w-[68px]"]} blank={7} />
        <Watermark />
      </aside>
    </div>
  );
}
